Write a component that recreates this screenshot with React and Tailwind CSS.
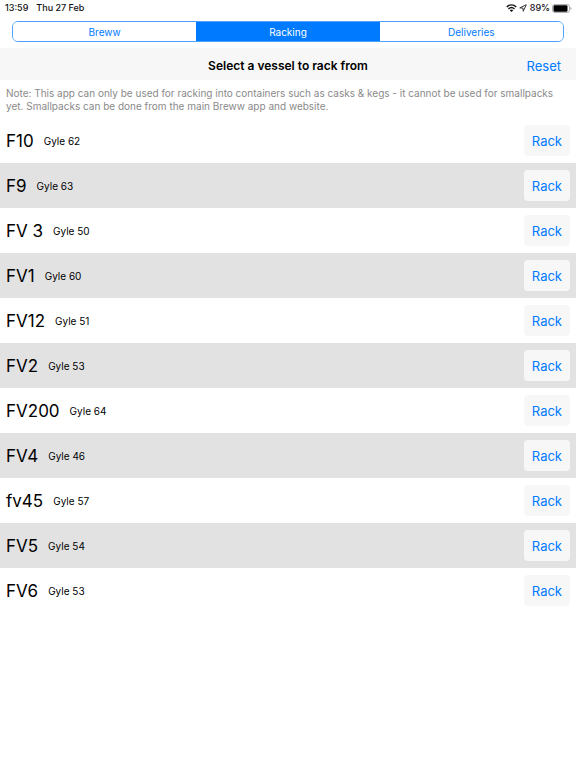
import React, { useState } from "react";

const tabs = ["Breww", "Racking", "Deliveries"];

const vessels = [
  { name: "F10", gyle: 62 },
  { name: "F9", gyle: 63 },
  { name: "FV 3", gyle: 50 },
  { name: "FV1", gyle: 60 },
  { name: "FV12", gyle: 51 },
  { name: "FV2", gyle: 53 },
  { name: "FV200", gyle: 64 },
  { name: "FV4", gyle: 46 },
  { name: "fv45", gyle: 57 },
  { name: "FV5", gyle: 54 },
  { name: "FV6", gyle: 53 },
];

const WifiIcon = () => (
  <svg width="11" height="8" viewBox="0 0 22 16" fill="none" stroke="#111" strokeWidth="2.8" aria-hidden="true">
    <path d="M1.5 6C7 0.3 15 0.3 20.5 6" />
    <path d="M5 9.8C8.5 6.3 13.5 6.3 17 9.8" />
    <path d="M11 16L7.6 12.4C9.5 10.6 12.5 10.6 14.4 12.4Z" fill="#111" stroke="none" />
  </svg>
);

const LocationIcon = () => (
  <svg width="8" height="8" viewBox="0 0 16 16" fill="none" stroke="#222" strokeWidth="1.8" strokeLinejoin="round" aria-hidden="true">
    <path d="M14.5 1.5L1.5 7.8L8 8.2L8.4 14.5Z" />
  </svg>
);

const BatteryIcon = () => (
  <svg width="20" height="9" viewBox="0 0 40 18" fill="none" aria-hidden="true">
    <rect x="1" y="1" width="34" height="16" rx="4.5" stroke="#8e8e8e" strokeWidth="1.4" />
    <rect x="3" y="2.6" width="28" height="12.8" rx="2.5" fill="#000" />
    <path d="M37 6.2C39.4 7.2 39.4 10.8 37 11.8Z" fill="#8e8e8e" />
  </svg>
);

const App = () => {
  const [activeTab, setActiveTab] = useState("Racking");

  return (
    <div className="min-h-screen bg-white text-black font-[Inter,sans-serif]">
      {/* Status bar */}
      <div className="flex h-4 items-center justify-between pl-[5px] pr-1 text-[9px] leading-4 font-medium text-[#111]">
        <div className="flex gap-2">
          <span>13:59</span>
          <span>Thu 27 Feb</span>
        </div>
        <div className="flex items-center gap-[2px]">
          <WifiIcon />
          <LocationIcon />
          <span className="pl-px">89%</span>
          <BatteryIcon />
        </div>
      </div>

      {/* Tabs */}
      <nav className="mx-3 mt-[5px] mb-[6px] grid h-[21px] grid-cols-3 overflow-hidden rounded-md border border-[#4da2ff]">
        {tabs.map((tab) => (
          <button
            key={tab}
            type="button"
            onClick={() => setActiveTab(tab)}
            className={`text-[10px] leading-4 ${
              activeTab === tab ? "bg-[#007aff] text-white" : "bg-white text-[#007aff]"
            }`}
          >
            {tab}
          </button>
        ))}
      </nav>

      {/* Title */}
      <header className="grid h-8 grid-cols-[1fr_auto_1fr] items-center bg-[#f7f7f7] pt-1">
        <h1 className="col-start-2 text-[12px] leading-5 font-semibold">Select a vessel to rack from</h1>
        <button type="button" className="justify-self-end pr-[15px] text-[13px] leading-5 text-[#007aff]">
          Reset
        </button>
      </header>

      <p className="px-[6px] pt-[7px] pb-[5px] text-[10px] leading-[13px] text-[#8a8a8a]">
        Note: This app can only be used for racking into containers such as casks &amp; kegs - it cannot be used for
        smallpacks yet. Smallpacks can be done from the main Breww app and website.
      </p>

      {/* Vessels */}
      <ul>
        {vessels.map((vessel) => (
          <li key={vessel.name} className="flex h-[45px] items-center px-[6px] even:bg-[#e2e2e2]">
            <span className="text-[17px] leading-6">{vessel.name}</span>
            <span className="ml-[10px] text-[10px] leading-4">Gyle {vessel.gyle}</span>
            <button
              type="button"
              className="ml-auto h-[31px] rounded bg-[#f7f7f7] px-2 text-[13px] leading-5 text-[#007aff]"
            >
              Rack
            </button>
          </li>
        ))}
      </ul>
    </div>
  );
};

export default App;
